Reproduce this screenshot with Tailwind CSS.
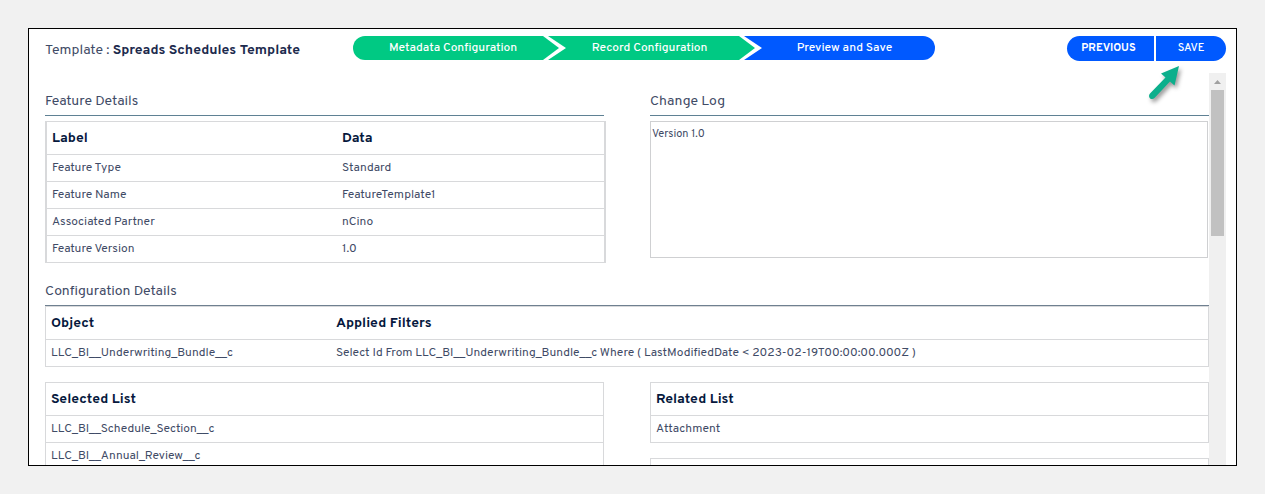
<!DOCTYPE html>
<html lang="en">
<head>
<meta charset="utf-8">
<meta name="viewport" content="width=device-width, initial-scale=1">
<title>Spreads Schedules Template</title>
<script src="https://cdn.jsdelivr.net/npm/@tailwindcss/browser@4"></script>
</head>
<body class="h-screen bg-[#f1f1f1] p-7 font-['Overpass',Roboto,sans-serif] text-xs text-[#3f4b66]">
<main class="flex h-full flex-col overflow-hidden border border-black bg-white pr-[10px] pl-4">
  <header class="flex h-11 shrink-0 items-start pt-[7px]">
    <h1 class="w-[308px] shrink-0 pt-[5px] text-sm leading-5">Template : <strong class="font-bold text-[#1c2a4d]">Spreads Schedules Template</strong></h1>
    <ol class="flex h-6 w-[582px] text-center font-medium leading-6 text-white">
      <li class="w-[206px] rounded-l-full bg-[#00c983] pr-1.5 [clip-path:polygon(0_0,calc(100%-16px)_0,100%_50%,calc(100%-16px)_100%,0_100%)]">Metadata Configuration</li>
      <li class="-ml-[11px] w-[207px] bg-[#00c983] pr-1 [clip-path:polygon(0_0,calc(100%-16px)_0,100%_50%,calc(100%-16px)_100%,0_100%,18px_50%)]">Record Configuration</li>
      <li class="-ml-[11px] flex-1 rounded-r-full bg-[#0059ff] pl-2.5 [clip-path:polygon(0_0,100%_0,100%_100%,0_100%,18px_50%)]">Preview and Save</li>
    </ol>
    <div class="relative ml-auto flex gap-0.5 text-[11px] leading-[25px] text-white">
      <button type="button" class="w-[87px] rounded-l-full bg-[#0059ff] pr-1 font-bold">PREVIOUS</button>
      <button type="button" class="w-[70px] rounded-r-full bg-[#0059ff] font-medium">SAVE</button>
      <svg class="absolute top-7 left-[76px] h-12 w-12 drop-shadow-[2px_3px_2px_rgb(0_0_0/0.4)]" viewBox="0 0 48 48" aria-hidden="true">
        <path fill="#0caf8c" d="M36 2 18 9.500 22.500 13.500 7 29.500C4 33 8.500 37 11.500 34L27 17.500 31.500 21.500Z"/>
      </svg>
    </div>
  </header>

  <div class="flex min-h-0 flex-1">
    <div class="min-w-0 flex-1 overflow-hidden">
      <div class="grid grid-cols-2 gap-x-[46px]">
        <section>
          <h2 class="border-b border-[#5f8194] pt-[19px] pb-[3px] text-sm leading-5">Feature Details</h2>
          <table class="mt-[5px] -mr-0.5 w-[calc(100%+2px)] table-fixed border-separate border-spacing-0 border-x-2 border-t border-[#d8d9db] text-left">
            <thead><tr class="text-sm text-[#06183d]"><th class="h-[33px] w-[290px] border-b border-[#d8d9db] px-[5px] pt-0.5 pb-0 font-bold">Label</th><th class="border-b border-[#d8d9db] px-[5px] pt-0.5 pb-0 font-bold">Data</th></tr></thead>
            <tbody>
              <tr><td class="h-[27px] border-b border-[#d8d9db] px-[5px]">Feature Type</td><td class="border-b border-[#d8d9db] px-[5px]">Standard</td></tr>
              <tr><td class="h-[27px] border-b border-[#d8d9db] px-[5px]">Feature Name</td><td class="border-b border-[#d8d9db] px-[5px]">FeatureTemplate1</td></tr>
              <tr><td class="h-[27px] border-b border-[#d8d9db] px-[5px]">Associated Partner</td><td class="border-b border-[#d8d9db] px-[5px]">nCino</td></tr>
              <tr><td class="h-[27px] border-b border-[#d8d9db] px-[5px]">Feature Version</td><td class="border-b border-[#d8d9db] px-[5px]">1.0</td></tr>
            </tbody>
          </table>
        </section>
        <section>
          <h2 class="border-b border-[#5f8194] pt-[19px] pb-[3px] text-sm leading-5"><label for="log">Change Log</label></h2>
          <textarea id="log" class="mt-[5px] block h-[137px] w-[calc(100%-1px)] resize-none border border-[#cfd0d2] px-px py-1 text-[11px] leading-4">Version 1.0</textarea>
        </section>
      </div>

      <section>
        <h2 class="border-b border-[#6f8090] pt-[19px] pb-[3px] text-sm leading-5">Configuration Details</h2>
        <table class="w-full table-fixed border-separate border-spacing-0 border-x border-t border-[#d8d9db] text-left">
          <thead><tr class="text-sm text-[#06183d]"><th class="h-[33px] w-[285px] border-b border-[#d8d9db] px-[5px] pt-0.5 pb-0 font-bold">Object</th><th class="border-b border-[#d8d9db] px-[5px] pt-0.5 pb-0 font-bold">Applied Filters</th></tr></thead>
          <tbody><tr><td class="h-[27px] border-b border-[#d8d9db] px-[5px]">LLC_BI__Underwriting_Bundle__c</td><td class="border-b border-[#d8d9db] px-[5px]">Select Id From LLC_BI__Underwriting_Bundle__c Where ( LastModifiedDate &lt; 2023-02-19T00:00:00.000Z )</td></tr></tbody>
        </table>
        <div class="mt-[15px] grid grid-cols-2 items-start gap-x-[46px]">
          <table class="w-full border-separate border-spacing-0 border-x border-t border-[#d8d9db] text-left">
            <thead><tr><th class="h-[33px] border-b border-[#d8d9db] px-[5px] pt-0.5 pb-0 text-sm font-bold text-[#06183d]">Selected List</th></tr></thead>
            <tbody>
              <tr><td class="h-[27px] border-b border-[#d8d9db] px-[5px]">LLC_BI__Schedule_Section__c</td></tr>
              <tr><td class="h-[27px] border-b border-[#d8d9db] px-[5px]">LLC_BI__Annual_Review__c</td></tr>
            </tbody>
          </table>
          <div>
            <table class="w-full border-separate border-spacing-0 border-x border-t border-[#d8d9db] text-left">
              <thead><tr><th class="h-[33px] border-b border-[#d8d9db] px-[5px] pt-0.5 pb-0 text-sm font-bold text-[#06183d]">Related List</th></tr></thead>
              <tbody><tr><td class="h-[27px] border-b border-[#d8d9db] px-[5px]">Attachment</td></tr></tbody>
            </table>
            <div class="mt-[15px] h-8 border border-[#d8d9db]"></div>
          </div>
        </div>
      </section>
    </div>
    <!-- Scroll track with arrow and thumb -->
    <div class="flex w-[17px] shrink-0 flex-col items-center bg-[#f0f0f0]" aria-hidden="true">
      <svg class="h-[17px] w-[17px] shrink-0" viewBox="0 0 17 17"><path fill="#a0a0a0" d="M5 11h7L8.500 7Z"/></svg>
      <div class="h-[146px] w-[13px] bg-[#c1c1c1]"></div>
    </div>
  </div>
</main>
</body>
</html>
